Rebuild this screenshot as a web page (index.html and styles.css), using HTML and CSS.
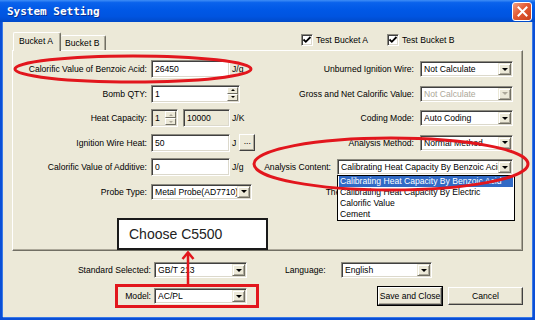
FILE: index.html
```html
<!DOCTYPE html>
<html>
<head>
<meta charset="UTF-8">
<title>System Setting</title>
<link rel="stylesheet" href="styles.css">
</head>
<body>
<div class="window">
  <div class="titlebar">
    <span class="title">System Setting</span>
    <span class="close">
      <svg width="11" height="11" viewBox="0 0 11 11"><path d="M1.5 1.5L9.5 9.5M9.5 1.5L1.5 9.5" stroke="#fff" stroke-width="2" stroke-linecap="square"/></svg>
    </span>
  </div>

  <div class="client">
    <div class="topbar">
      <div class="tabs">
        <span class="tab active">Bucket A</span>
        <span class="tab">Bucket B</span>
      </div>
      <div class="checks">
        <span class="check"><span class="box"><svg width="10" height="10" viewBox="0 0 10 10"><polyline points="1.5,4.5 3.8,6.8 8.5,2" fill="none" stroke="#000" stroke-width="1.8"/></svg></span>Test Bucket A</span>
        <span class="check"><span class="box"><svg width="10" height="10" viewBox="0 0 10 10"><polyline points="1.5,4.5 3.8,6.8 8.5,2" fill="none" stroke="#000" stroke-width="1.8"/></svg></span>Test Bucket B</span>
      </div>
    </div>

    <div class="panel">
      <div class="col left">
        <div class="row">
          <span class="lbl">Calorific Value of Benzoic Acid:</span>
          <span class="edit w79">26450</span>
          <span class="unit">J/g</span>
        </div>
        <div class="row">
          <span class="lbl">Bomb QTY:</span>
          <span class="edit w89"><span class="val">1</span><span class="spin"><i class="up"></i><i class="dn"></i></span></span>
        </div>
        <div class="row">
          <span class="lbl">Heat Capacity:</span>
          <span class="edit ro w27"><span class="val">1</span><span class="spin off"><i class="up"></i><i class="dn"></i></span></span>
          <span class="edit ro w47 gap5">10000</span>
          <span class="unit">J/K</span>
        </div>
        <div class="row">
          <span class="lbl">Ignition Wire Heat:</span>
          <span class="edit w79">50</span>
          <span class="unit">J</span>
          <span class="btn dots">...</span>
        </div>
        <div class="row">
          <span class="lbl">Calorific Value of Additive:</span>
          <span class="edit w79">0</span>
          <span class="unit">J/g</span>
        </div>
        <div class="row">
          <span class="lbl">Probe Type:</span>
          <span class="select w101"><span class="val">Metal Probe(AD7710)</span><span class="arrow"></span></span>
        </div>
      </div>

      <div class="col right">
        <div class="row">
          <span class="lbl">Unburned Ignition Wire:</span>
          <span class="select w93"><span class="val">Not Calculate</span><span class="arrow"></span></span>
        </div>
        <div class="row">
          <span class="lbl">Gross and Net Calorific Value:</span>
          <span class="select w93 off"><span class="val">Not Calculate</span><span class="arrow"></span></span>
        </div>
        <div class="row">
          <span class="lbl">Coding Mode:</span>
          <span class="select w93"><span class="val">Auto Coding</span><span class="arrow"></span></span>
        </div>
        <div class="row">
          <span class="lbl">Analysis Method:</span>
          <span class="select w93"><span class="val">Normal Method</span><span class="arrow"></span></span>
        </div>
        <div class="row">
          <span class="lbl">Analysis Content:</span>
          <span class="select w176"><span class="val">Calibrating Heat Capacity By Benzoic Acid</span><span class="arrow"></span>
            <span class="list">
              <span class="item sel">Calibrating Heat Capacity By Benzoic Acid</span>
              <span class="item">Calibrating Heat Capacity By Electric</span>
              <span class="item">Calorific Value</span>
              <span class="item">Cement</span>
            </span>
          </span>
        </div>
        <div class="row">
          <span class="lbl">Thermometer Channel:</span>
          <span class="select w93"><span class="val">PT100</span><span class="arrow"></span></span>
        </div>
      </div>
    </div>

    <div class="bottom">
      <div class="brow">
        <span class="lbl">Standard Selected:</span>
        <span class="select w93"><span class="val">GB/T 213</span><span class="arrow"></span></span>
        <span class="lang">Language:</span>
        <span class="select w91"><span class="val">English</span><span class="arrow"></span></span>
      </div>
      <div class="brow tall">
        <span class="lbl">Model:</span>
        <span class="select w93"><span class="val">AC/PL</span><span class="arrow"></span></span>
        <span class="btn push default">Save and Close</span>
        <span class="btn push cancel">Cancel</span>
      </div>
    </div>
  </div>

  <div class="note">Choose C5500</div>

  <svg class="marks" width="535" height="320" viewBox="0 0 535 320">
    <ellipse cx="133" cy="69" rx="118" ry="13"/>
    <ellipse cx="391" cy="164" rx="137" ry="26"/>
    <rect x="116.5" y="285.5" width="141" height="21"/>
    <line x1="188" y1="284" x2="188" y2="253"/>
    <polyline points="182.5,259 188,252.5 193.5,259"/>
  </svg>
</div>
</body>
</html>
```

FILE: styles.css
```css
* {
  margin: 0;
  padding: 0;
  box-sizing: border-box;
}
body {
  width: 535px;
  height: 320px;
  overflow: hidden;
  font-family: "Liberation Sans", Arial, sans-serif;
  font-size: 8.6px;
  color: #000;
}
.window {
  position: relative;
  width: 535px;
  height: 320px;
  display: flex;
  flex-direction: column;
  background: #0b4fd6;
}

/* title bar */
.titlebar {
  height: 22px;
  display: flex;
  align-items: center;
  justify-content: space-between;
  padding: 0 3px 0 7px;
  background: linear-gradient(#3f8ef6, #0a62ec 12%, #0058e6 45%, #0054e0 75%, #004ac9);
}
.title {
  color: #fff;
  font: bold 11px "DejaVu Sans Mono", monospace;
  text-shadow: 1px 1px #0a2f8f;
}
.close {
  width: 20px;
  height: 19px;
  display: flex;
  align-items: center;
  justify-content: center;
  border: 1px solid #fff;
  border-radius: 3px;
  background: linear-gradient(135deg, #f3a184, #e35a33 45%, #c8401c);
}

/* client area */
.client {
  flex: 1;
  margin: 0 3px 3px;
  background: #ece9d8;
  display: flex;
  flex-direction: column;
  box-shadow: -1px 0 #3a7ae6, 1px 0 #3a7ae6, 0 1px #3a7ae6;
}
.topbar {
  height: 28px;
  display: flex;
  align-items: flex-end;
  padding-left: 10px;
}
.tabs {
  display: flex;
  align-items: flex-end;
}
.tab {
  height: 15px;
  width: 45px;
  padding: 2px 0 0 4px;
  border: 1px solid;
  border-bottom: none;
  border-color: #fff #716f64 #fff #fff;
  border-radius: 2px 2px 0 0;
  box-shadow: inset -1px 0 #aca899;
  white-space: nowrap;
}
.tab.active {
  position: relative;
  z-index: 1;
  width: 48px;
  height: 19px;
  margin-bottom: -1px;
  padding: 3px 0 0 5px;
  background: #ece9d8;
}
.tab.active + .tab {
  border-left: none;
}
.checks {
  display: flex;
  margin: 0 0 4px 195px;
}
.check {
  width: 86px;
  display: flex;
  align-items: center;
  white-space: nowrap;
}
.box {
  width: 12px;
  height: 12px;
  margin-right: 3px;
  background: #fff;
  border: 1px solid;
  border-color: #8d8b80 #fff #fff #8d8b80;
  box-shadow: inset 1px 1px #404040, inset -1px -1px #dcd9cc;
  display: flex;
  align-items: center;
  justify-content: center;
}

/* tab page */
.panel {
  margin-left: 9px;
  width: 511px;
  height: 201px;
  display: flex;
  padding-top: 6px;
  border: 1px solid;
  border-color: #fff #716f64 #716f64 #fff;
  box-shadow: inset -1px -1px #aca899;
}
.col {
  display: flex;
  flex-direction: column;
}
.left {
  width: 245px;
}
.right {
  flex: 1;
  align-items: flex-end;
  padding-right: 9px;
}
.row {
  height: 24.5px;
  display: flex;
  align-items: center;
  white-space: nowrap;
}
.left .lbl {
  width: 134px;
  margin-right: 4px;
  text-align: right;
}
.right .lbl {
  margin-right: 6px;
}
.unit {
  margin-left: 2px;
}

/* controls */
.edit,
.select {
  position: relative;
  display: flex;
  align-items: center;
  background: #fff;
  border: 1px solid;
  border-color: #8d8b80 #fff #fff #8d8b80;
  box-shadow: inset 1px 1px #404040, inset -1px -1px #dcd9cc;
  white-space: nowrap;
}
.edit {
  height: 18px;
  padding-left: 3px;
}
.edit.ro {
  background: #ece9d8;
}
.select {
  height: 16px;
  padding: 1px 1px 1px 3px;
}
.val {
  flex: 1;
  overflow: hidden;
}
.select.off .val {
  color: #aca899;
}
.gap5 {
  margin-left: 5px;
}
.w27 { width: 27px; }
.w47 { width: 47px; }
.w79 { width: 79px; }
.w89 { width: 89px; }
.w91 { width: 91px; }
.w93 { width: 93px; }
.w101 { width: 101px; }
.w176 { width: 176px; }

.arrow {
  width: 13px;
  height: 100%;
  display: flex;
  align-items: center;
  justify-content: center;
  background: #ece9d8;
  border: 1px solid;
  border-color: #ece9d8 #716f64 #716f64 #ece9d8;
  box-shadow: inset 1px 1px #fff, inset -1px -1px #aca899;
}
.arrow::before {
  content: "";
  border-top: 3px solid #000;
  border-left: 3px solid transparent;
  border-right: 3px solid transparent;
}
.select.off .arrow::before {
  border-top-color: #aca899;
}

.spin {
  width: 12px;
  height: 100%;
  padding: 1px 1px 1px 0;
  display: flex;
  flex-direction: column;
}
.spin i {
  flex: 1;
  display: flex;
  align-items: center;
  justify-content: center;
  background: #ece9d8;
  border: 1px solid;
  border-color: #fff #716f64 #716f64 #fff;
}
.spin .up::before,
.spin .dn::before {
  content: "";
  border-left: 2px solid transparent;
  border-right: 2px solid transparent;
}
.spin .up::before {
  border-bottom: 2px solid #000;
}
.spin .dn::before {
  border-top: 2px solid #000;
}
.spin.off .up::before {
  border-bottom-color: #aca899;
}
.spin.off .dn::before {
  border-top-color: #aca899;
}

.btn {
  display: flex;
  align-items: center;
  justify-content: center;
  background: #ece9d8;
  border: 1px solid;
  border-color: #fff #404040 #404040 #fff;
  box-shadow: inset -1px -1px #aca899;
  white-space: nowrap;
}
.dots {
  width: 16px;
  height: 17px;
  margin-left: 3px;
  padding-bottom: 3px;
}

/* open combo list */
.list {
  position: absolute;
  z-index: 2;
  top: 15px;
  left: -1px;
  width: 178px;
  display: flex;
  flex-direction: column;
  padding: 0 1px;
  background: #fff;
  border: 1px solid #000;
}
.item {
  height: 11px;
  line-height: 11px;
  padding-left: 1px;
  overflow: hidden;
}
.item.sel {
  background: #316ac5;
  color: #fff;
}

/* bottom rows */
.bottom {
  display: flex;
  flex-direction: column;
  gap: 9px;
  padding: 11px 9px 0 0;
}
.brow {
  height: 16px;
  display: flex;
  align-items: center;
  white-space: nowrap;
}
.brow.tall {
  height: 18px;
}
.brow .lbl {
  width: 148px;
  margin-right: 3px;
  text-align: right;
}
.lang {
  width: 56px;
  margin-left: 38px;
}
.push {
  height: 18px;
}
.default {
  width: 64px;
  margin-left: auto;
  outline: 1px solid #000;
  outline-offset: 0;
}
.cancel {
  width: 75px;
  margin-left: 6px;
}

/* annotations */
.note {
  position: absolute;
  left: 117px;
  top: 218px;
  width: 151px;
  height: 32px;
  padding-left: 10px;
  display: flex;
  align-items: center;
  background: #fff;
  border: 2px solid #1a1a1a;
  font-family: "Liberation Sans", Arial, sans-serif;
  font-size: 14px;
  color: #222;
}
.marks {
  position: absolute;
  left: 0;
  top: 0;
  z-index: 5;
  fill: none;
  stroke: #e2161d;
  stroke-width: 3;
}
.marks line,
.marks polyline {
  stroke-width: 2.5;
}
```
